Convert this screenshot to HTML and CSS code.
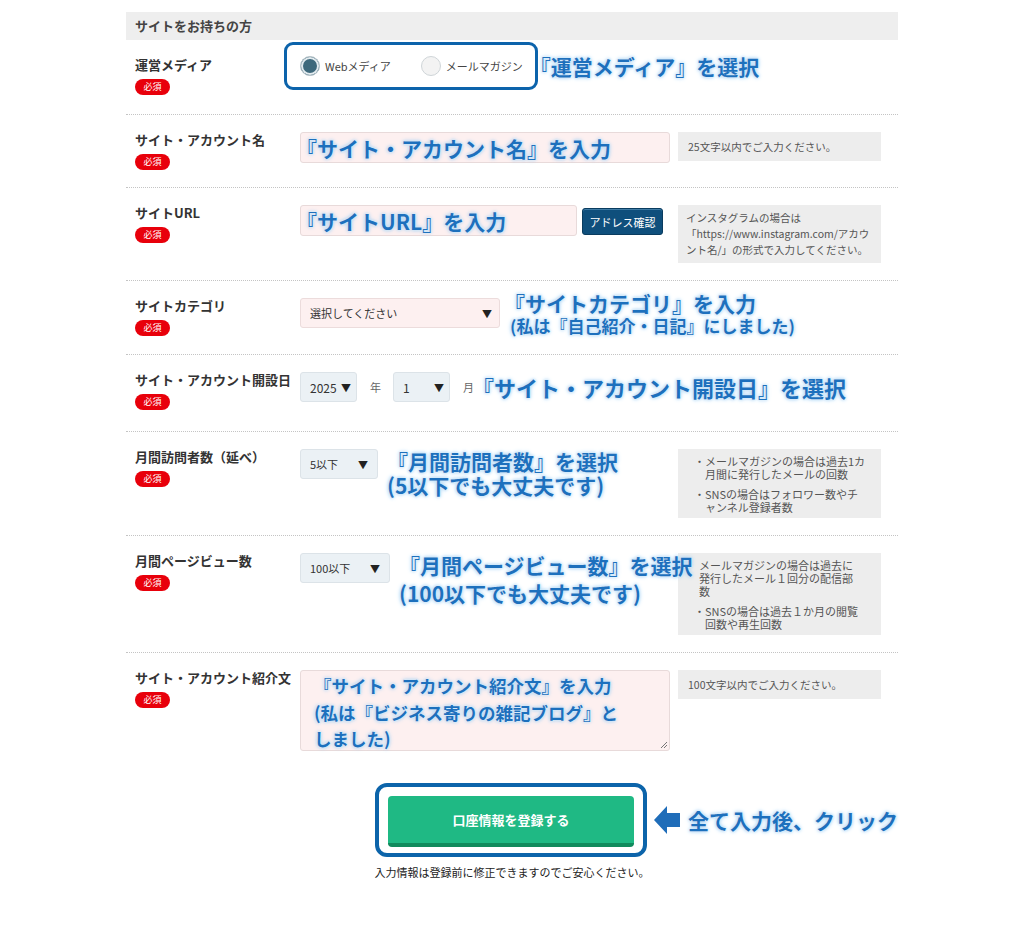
FILE: index.html
```html
<!DOCTYPE html>
<html lang="ja">
<head>
    <meta charset="UTF-8">
    <title>サイト情報の登録</title>
    <link rel="stylesheet" href="styles.css">
</head>
<body>

<div class="form">
    <div class="section-head">サイトをお持ちの方</div>

    <!-- 運営メディア -->
    <div class="row row-first">
        <div class="label"><p>運営メディア</p><span class="req">必須</span></div>
        <div class="field field-media">
            <div class="media-box">
                <span class="radio"><span class="dot on"></span>Webメディア</span>
                <span class="radio"><span class="dot"></span>メールマガジン</span>
            </div>
            <div class="memo memo-media">『運営メディア』を選択</div>
        </div>
    </div>

    <!-- サイト・アカウント名 -->
    <div class="row">
        <div class="label"><p>サイト・アカウント名</p><span class="req">必須</span></div>
        <div class="field">
            <div class="input"><span class="memo memo-input">『サイト・アカウント名』を入力</span></div>
        </div>
        <div class="note">25文字以内でご入力ください。</div>
    </div>

    <!-- サイトURL -->
    <div class="row">
        <div class="label"><p>サイトURL</p><span class="req">必須</span></div>
        <div class="field">
            <div class="input input-url"><span class="memo memo-input">『サイトURL』を入力</span></div>
            <div class="btn-check">アドレス確認</div>
        </div>
        <div class="note note-url">インスタグラムの場合は<br>「https://www.instagram.com/アカウ<br>ント名/」の形式で入力してください。</div>
    </div>

    <!-- サイトカテゴリ -->
    <div class="row">
        <div class="label"><p>サイトカテゴリ</p><span class="req">必須</span></div>
        <div class="field">
            <div class="select select-pink select-cat"><span>選択してください</span><span class="arrow">▼</span></div>
            <div class="memo memo-cat">
                <div>『サイトカテゴリ』を入力</div>
                <div class="memo-sub">(私は『自己紹介・日記』にしました)</div>
            </div>
        </div>
    </div>

    <!-- 開設日 -->
    <div class="row row-date">
        <div class="label"><p>サイト・アカウント開設日</p><span class="req">必須</span></div>
        <div class="field field-date">
            <div class="select select-num select-year"><span>2025</span><span class="arrow">▼</span></div>
            <span class="unit">年</span>
            <div class="select select-num select-month"><span>1</span><span class="arrow">▼</span></div>
            <span class="unit">月</span>
            <div class="memo memo-date">『サイト・アカウント開設日』を選択</div>
        </div>
    </div>

    <!-- 月間訪問者数 -->
    <div class="row">
        <div class="label"><p>月間訪問者数（延べ）</p><span class="req">必須</span></div>
        <div class="field">
            <div class="select select-visit"><span>5以下</span><span class="arrow">▼</span></div>
            <div class="memo memo-visit">
                <div>『月間訪問者数』を選択</div>
                <div>(5以下でも大丈夫です)</div>
            </div>
        </div>
        <ul class="note note-list">
            <li>・メールマガジンの場合は過去1カ<br>月間に発行したメールの回数</li>
            <li>・SNSの場合はフォロワー数やチ<br>ャンネル登録者数</li>
        </ul>
    </div>

    <!-- 月間ページビュー数 -->
    <div class="row">
        <div class="label"><p>月間ページビュー数</p><span class="req">必須</span></div>
        <div class="field">
            <div class="select select-pv"><span>100以下</span><span class="arrow">▼</span></div>
            <div class="memo memo-pv">
                <div>『月間ページビュー数』を選択</div>
                <div class="memo-pv-sub">(100以下でも大丈夫です)</div>
            </div>
        </div>
        <ul class="note note-list">
            <li class="plain">メールマガジンの場合は過去に<br>発行したメール１回分の配信部<br>数</li>
            <li>・SNSの場合は過去１か月の閲覧<br>回数や再生回数</li>
        </ul>
    </div>

    <!-- 紹介文 -->
    <div class="row row-last">
        <div class="label"><p>サイト・アカウント紹介文</p><span class="req">必須</span></div>
        <div class="field">
            <div class="textarea">
                <span class="memo memo-text">『サイト・アカウント紹介文』を入力<br>(私は『ビジネス寄りの雑記ブログ』と<br>しました)</span>
                <svg class="grip" width="7" height="7" viewBox="0 0 7 7">
                    <path d="M1 7 L7 1 M4 7 L7 4" stroke="#777" stroke-width="1" fill="none"/>
                </svg>
            </div>
        </div>
        <div class="note">100文字以内でご入力ください。</div>
    </div>

    <div class="submit">
        <div class="submit-frame">
            <div class="btn-submit">口座情報を登録する</div>
        </div>
        <div class="submit-memo">
            <svg width="26" height="28" viewBox="0 0 26 28">
                <polygon points="0,14 13,0 13,7 26,7 26,21 13,21 13,28" fill="#1f6db9"/>
            </svg>
            <span class="memo">全て入力後、クリック</span>
        </div>
    </div>
    <p class="caption">入力情報は登録前に修正できますのでご安心ください。</p>
</div>

</body>
</html>
```

FILE: styles.css
```css
body {
    margin: 0;
    background: #fff;
    font-family: "Noto Sans CJK JP", "Noto Sans", sans-serif;
    color: #333;
}
.form {
    width: 772px;
    margin: 12px auto 0;
}
.section-head {
    background: #eee;
    height: 28px;
    line-height: 28px;
    padding-left: 9px;
    font-size: 13px;
    font-weight: bold;
    color: #444;
}
.row {
    display: flex;
    align-items: flex-start;
    padding: 17px 17px 17px 9px;
    border-bottom: 1px dotted #c4c4c4;
}
.row-first {
    padding-bottom: 19px;
}
.row-last {
    border-bottom: none;
}
.row-date {
    padding-bottom: 21px;
}
.label {
    flex: 0 0 165px;
}
.label p {
    margin: 0;
    font-size: 13px;
    line-height: 16px;
    font-weight: bold;
    color: #333;
}
.req {
    display: block;
    margin-top: 6px;
    width: 35px;
    height: 16px;
    line-height: 16px;
    border-radius: 8px;
    background: #e8000b;
    color: #fff;
    font-size: 9px;
    text-align: center;
}
.field {
    flex: none;
    width: 370px;
    min-width: 0;
    display: flex;
    align-items: flex-start;
}
.note {
    flex: 0 0 203px;
    box-sizing: border-box;
    margin: 0 0 0 8px;
    padding: 7px 10px;
    background: #ededed;
    font-size: 10.5px;
    line-height: 15px;
    color: #555;
}
.note-url {
    padding: 5px 8px;
    line-height: 16px;
}
.note-list {
    list-style: none;
    padding: 6px 10px 4px 16px;
    font-size: 11px;
    line-height: 13px;
}
.note-list li {
    padding-left: 11px;
    text-indent: -11px;
    white-space: nowrap;
}
.note-list li.plain {
    padding-left: 5px;
    text-indent: 0;
}
.note-list li + li {
    margin-top: 7px;
}

/* annotations */
.memo {
    position: relative;
    z-index: 1;
    flex: none;
    white-space: nowrap;
    color: #1d70bd;
    font-weight: bold;
    font-size: 21px;
    line-height: 26px;
    text-shadow: 0 0 2px #fff, 0 0 3px #8cc6f2, 0 0 5px #acd6f6;
}
.memo-media {
    margin-left: -8px;
}
.memo-input {
    margin-left: -5px;
}
.memo-cat {
    margin: -7px 0 0 4px;
    line-height: 24px;
}
.memo-sub {
    font-size: 17px;
    line-height: 22px;
    padding-left: 6px;
}
.memo-date {
    margin-left: -14px;
    font-size: 22px;
}
.memo-visit {
    margin-left: 9px;
    line-height: 24px;
}
.memo-pv {
    margin-left: 9px;
    line-height: 24px;
}
.memo-pv-sub {
    margin-top: 4px;
}

/* 運営メディア */
.field-media {
    align-items: center;
    margin-top: -15px;
}
.media-box {
    flex: none;
    display: flex;
    align-items: center;
    margin-left: -16px;
    padding: 11px 12px 11px 13px;
    border: 3px solid #0c63ab;
    border-radius: 9px;
}
.radio {
    display: flex;
    align-items: center;
    gap: 5px;
    white-space: nowrap;
    font-size: 11px;
    color: #444;
}
.radio + .radio {
    margin-left: 30px;
}
.dot {
    width: 18px;
    height: 18px;
    border-radius: 50%;
    border: 1px solid #cfd5d8;
    background: #f3f3f3;
}
.dot.on {
    background: #3e697c;
    box-shadow: inset 0 0 0 2px #e3ebef;
    border-color: #b9c5cb;
}

/* inputs */
.input {
    flex: 0 0 370px;
    box-sizing: border-box;
    height: 31px;
    display: flex;
    align-items: center;
    border: 1px solid #e8dada;
    border-radius: 3px;
    background: #fdf0f0;
}
.input-url {
    flex-basis: 277px;
}
.btn-check {
    flex: none;
    box-sizing: border-box;
    width: 81px;
    height: 27px;
    margin: 3px 0 0 5px;
    display: flex;
    align-items: center;
    justify-content: center;
    background: #0f4f7c;
    border: 1px solid #0a3c5f;
    border-radius: 3px;
    box-shadow: inset 0 1px 0 #3f7ca6;
    color: #fff;
    font-size: 11px;
}
.select {
    flex: none;
    box-sizing: border-box;
    height: 30px;
    display: flex;
    align-items: center;
    justify-content: space-between;
    padding: 0 7px 0 9px;
    border: 1px solid #dce3e8;
    border-radius: 3px;
    background: #ebf1f5;
    font-size: 11px;
    color: #333;
}
.select-pink {
    background: #fdf0f0;
    border-color: #ecdcdc;
}
.select-num {
    font-size: 12px;
}
.arrow {
    font-size: 10px;
    color: #222;
}
.select-cat {
    width: 200px;
}
.select-year,
.select-month {
    width: 57px;
    padding-right: 5px;
}
.select-visit {
    width: 78px;
    padding-right: 9px;
}
.select-pv {
    width: 90px;
    padding-right: 9px;
}
.field-date {
    align-items: center;
}
.unit {
    margin: 0 12px 0 13px;
    font-size: 11px;
    color: #666;
}
.textarea {
    flex: 0 0 370px;
    box-sizing: border-box;
    height: 81px;
    position: relative;
    padding: 2px 13px;
    border: 1px solid #e8dada;
    border-radius: 3px;
    background: #fdf0f0;
}
.memo-text {
    display: block;
    font-size: 17.5px;
    line-height: 26.5px;
}
.grip {
    position: absolute;
    right: 2px;
    bottom: 2px;
}

/* submit */
.submit {
    display: grid;
    grid-template-columns: 1fr auto 1fr;
    align-items: center;
    margin-top: 15px;
}
.submit-frame {
    grid-column: 2;
    padding: 9px 9px 6px;
    border: 4px solid #0c64aa;
    border-radius: 12px;
}
.btn-submit {
    box-sizing: border-box;
    width: 246px;
    height: 51px;
    display: flex;
    align-items: center;
    justify-content: center;
    background: #1fb984;
    border-bottom: 4px solid #118a5d;
    border-radius: 4px;
    color: #fff;
    font-size: 13px;
    font-weight: bold;
}
.submit-memo {
    display: flex;
    align-items: center;
    gap: 8px;
    margin-left: 7px;
}
.caption {
    margin: 7px 0 0;
    text-align: center;
    font-size: 11px;
    line-height: 16px;
    color: #222;
}
```
